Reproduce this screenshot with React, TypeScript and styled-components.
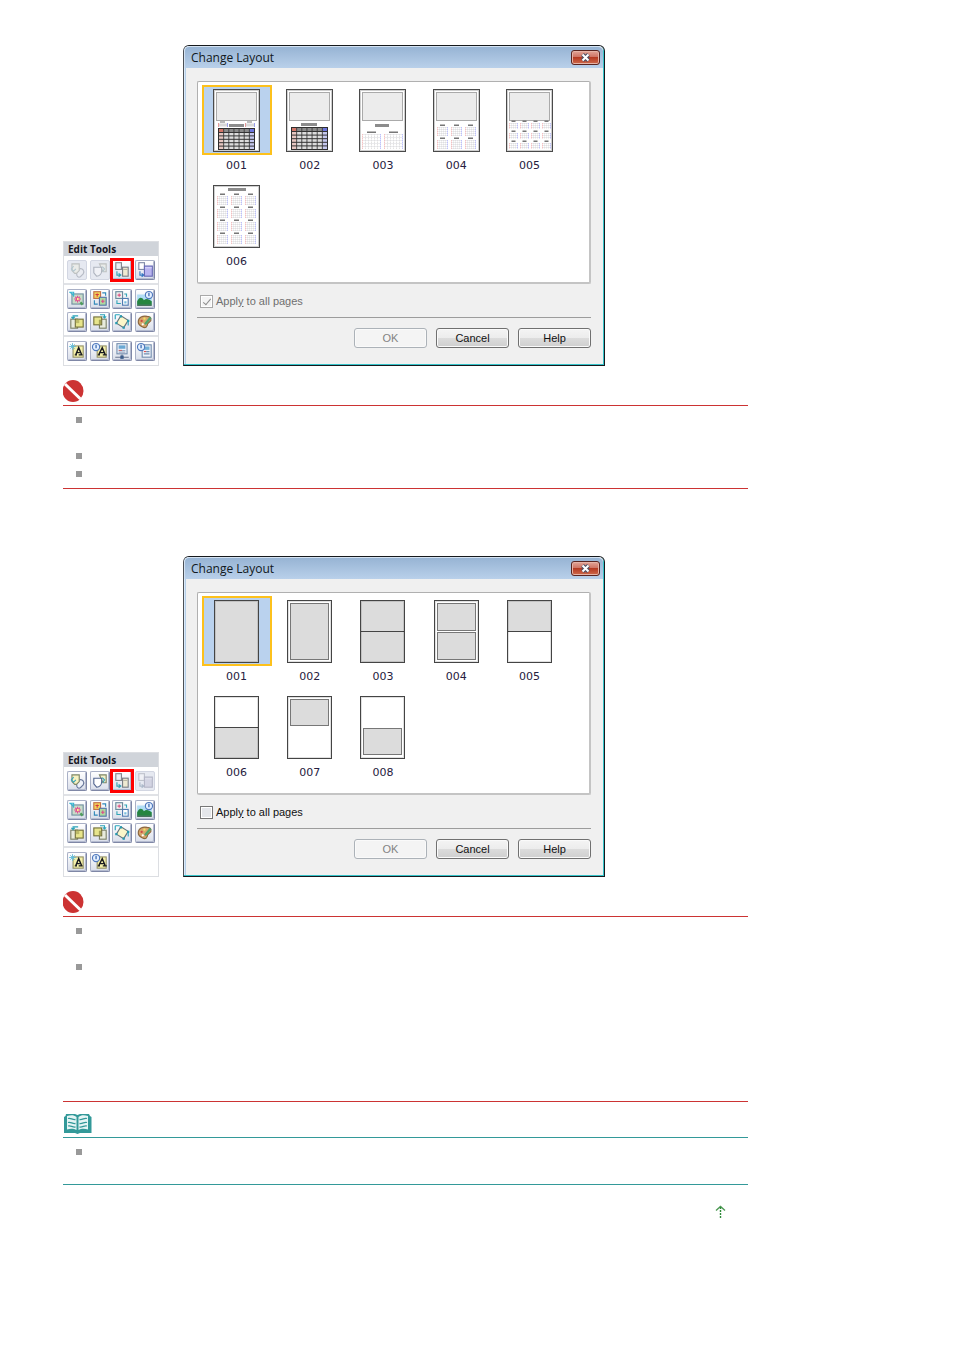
import React from "react";
import styled, { createGlobalStyle, css } from "styled-components";

const RED = "#cc3333";
const TEAL = "#339999";

const GlobalStyle = createGlobalStyle`
  *, *::before, *::after { box-sizing: border-box; }
  body {
    margin: 0;
    background: #fff;
    color: #111;
    font-family: "Liberation Sans", Arial, sans-serif;
    font-size: 12px;
  }
  button { font: inherit; color: inherit; margin: 0; padding: 0; }
`;

const Page = styled.main`
  max-width: 748px;
  padding: 45px 0 40px 63px;
`;

const Section = styled.section`
  margin-bottom: 67px;
`;

const Figure = styled.div`
  display: flex;
  align-items: flex-end;
  gap: 24px;
  margin-bottom: 14px;
`;

/* ---------- Edit Tools palette ---------- */

const Palette = styled.div`
  flex: none;
  width: 96px;
  border: 1px solid #dcdee2;
  background: #fff;
`;

const PaletteTitle = styled.h3`
  margin: 0;
  height: 14px;
  padding-left: 4px;
  background: #d0d4da;
  color: #15151f;
  font: bold 10px/14px "Open Sans", "Noto Sans", sans-serif;
`;

const ToolGroup = styled.div<{ $last?: boolean }>`
  display: grid;
  grid-template-columns: repeat(4, 20px);
  justify-content: space-between;
  row-gap: 3px;
  padding: ${(p) => (p.$last ? "4px 3px" : "4px 3px 3px")};
  border-bottom: ${(p) => (p.$last ? "0" : "2px solid #e0e2e6")};
`;

const ToolButton = styled.button<{ $marked?: boolean }>`
  width: 20px;
  height: 20px;
  display: grid;
  place-items: center;
  border: 1px solid #7f87a6;
  border-top-color: #a9b0c6;
  border-left-color: #a9b0c6;
  border-radius: 2px;
  background: linear-gradient(#ffffff, #d9deea);
  box-shadow: inset -1px -1px 0 #b4bbd0;
  &:disabled {
    border-color: #d2d6e2;
    background: #e6e9f1;
    box-shadow: none;
  }
  &:disabled svg { opacity: 0.4; filter: saturate(0.4); }
  ${(p) =>
    p.$marked &&
    css`
      border-radius: 0;
      outline: 3px solid #ff0000;
      outline-offset: -1px;
      z-index: 1;
    `}
`;

type ToolName =
  | "front" | "back" | "layout" | "background"
  | "insert" | "swap" | "replace" | "adjust"
  | "rotateLeft" | "rotateRight" | "crop" | "decorate"
  | "text" | "textInfo" | "calendar" | "holiday";

const Clock = ({ x, y }: { x: number; y: number }) => (
  <g>
    <circle cx={x} cy={y} r="3.2" fill="#e5f0ff" stroke="#4f78bd" />
    <path d={`M${x} ${y - 2}V${y + 1}`} stroke="#245aa8" />
  </g>
);

const toolArt: Record<ToolName, React.ReactNode> = {
  front: (
    <>
      <path d="M10 7c3-1 5 2 3.500 4.500L11 14c-2 1-4-1-3-3" fill="#eef2fa" stroke="#68779a" />
      <path d="M3.500 2.500h6.500v6L7.500 11H6L3.500 8.500z" fill="#f7f2c0" stroke="#7e8668" />
      <path d="M5 4.500 3 7l2 2 2-2" fill="none" stroke="#36a2b8" />
    </>
  ),
  back: (
    <>
      <path d="M7.500 2.500h6v7h-3z" fill="#f2f0c8" stroke="#7e8668" />
      <path d="M2.500 5.500h7v3c0 3-2 5-4.500 5l-2.500-3z" fill="#fff" stroke="#53658f" />
      <path d="m10 5 2 2-1.500 2.500" fill="none" stroke="#36a2b8" />
    </>
  ),
  layout: (
    <>
      <rect x="2.500" y="1.500" width="5" height="6" fill="#eceff4" stroke="#84888f" />
      <path d="M3.500 9v3.500H7M5 11l2 1.500L5 14" fill="none" stroke="#35a3b3" />
      <rect x="8.500" y="5.500" width="5" height="8" fill="#efead2" stroke="#7c7f86" />
      <path d="M9 7.500h4" stroke="#bbb8a6" />
    </>
  ),
  background: (
    <>
      <rect x="2.500" y="1.500" width="5" height="6" fill="#fff" stroke="#818ba8" />
      <path d="M3.500 9v3.500H7M5 11l2 1.500L5 14" fill="none" stroke="#3577c3" />
      <rect x="7.500" y="4.500" width="7" height="9" fill="#b9b4f0" stroke="#6769b5" />
      <path d="M8 6h6" stroke="#d8d6fa" />
    </>
  ),
  insert: (
    <>
      <rect x="3.500" y="3.500" width="10" height="9" fill="#c8dcc8" stroke="#7290a0" />
      <path d="M8.500 5v6M5.500 8h6M6.500 6l4 4M10.500 6l-4 4" stroke="#e24c91" />
      <rect x="8" y="7" width="1.500" height="2" fill="#fff28a" />
      <path d="M1 2h4v4M5 5 2 2" fill="none" stroke="#38b6d2" />
      <path d="m11 11 2 2" stroke="#4f9c5c" strokeWidth="2" />
    </>
  ),
  swap: (
    <>
      <rect x="2.500" y="1.500" width="6" height="6" fill="#f1d15b" stroke="#c1714b" />
      <path d="M4 4h3M5.500 3v3" stroke="#d7373e" />
      <rect x="7.500" y="6.500" width="6" height="7" fill="#aed9a0" stroke="#5575a9" />
      <path d="M9 10h3M10.500 8.500v3" stroke="#e04989" />
      <path d="M10 2.500h3V5M6 12.500H3V9" fill="none" stroke="#2f88b9" />
    </>
  ),
  replace: (
    <>
      <rect x="2.500" y="1.500" width="6" height="6" fill="#eef0ee" stroke="#698a9c" />
      <path d="M4 4.500h3M5.500 3v3" stroke="#dd5484" />
      <path d="M10 3.500h2V6M3.500 9v3H7" fill="none" stroke="#32a4b6" />
      <rect x="8.500" y="7.500" width="5" height="6" fill="#fff" stroke="#527bb1" />
      <path d="M10 10h2v2h-2z" fill="#79bdde" />
    </>
  ),
  adjust: (
    <>
      <rect x="1" y="4" width="13" height="9" fill="#b1ddf5" />
      <path d="M1 10c2-4 4-4 6-1 2-2 5-1 7 1v3H1z" fill="#268540" />
      <path d="M1 13.500h13" stroke="#174f2d" />
      <Clock x={11.5} y={4.5} />
    </>
  ),
  rotateLeft: (
    <>
      <rect x="2.500" y="5.500" width="6" height="8" fill="#e8ebdc" stroke="#7d8369" />
      <rect x="6.500" y="5.500" width="7" height="7" fill="#e7e58c" stroke="#73713c" />
      <path d="M7 6h3v3H7z" fill="#bdbb68" />
      <path d="M9 2.500H4.500V5M3 3.500 4.500 5 6 3.500" fill="none" stroke="#2da4b9" />
    </>
  ),
  rotateRight: (
    <>
      <rect x="7.500" y="5.500" width="6" height="8" fill="#e8ebdc" stroke="#7d8369" />
      <rect x="2.500" y="3.500" width="7" height="7" fill="#e7e58c" stroke="#73713c" />
      <path d="M7 6h2v4H7z" fill="#a6a456" />
      <path d="M8 1.500h4V4M10.500 3 12 4.500 13.500 3" fill="none" stroke="#2da4b9" />
    </>
  ),
  crop: (
    <>
      <path d="m7 2.500 6.500 4-4 6.500-6.500-4z" fill="#fbf7c9" stroke="#65757c" />
      <path d="M2 1.500h4M2 1.500v4M13.500 11v-3" stroke="#28a4bc" />
      <path d="M6 2h2v2H6zM12.500 6h2v2h-2zM8.500 12h2v2h-2zM2 8h2v2H2z" fill="#269ab0" />
    </>
  ),
  decorate: (
    <>
      <path d="M2 8c0-4 4-6 8-5 4 0 4 4 2 5-1 1-2 1-2 3-1 3-3 2-5 1C3 11 2 10 2 8z" fill="#d7a76c" stroke="#8c683f" />
      <circle cx="5" cy="7" r="1" fill="#cf4545" />
      <circle cx="7.500" cy="5" r="1" fill="#f1e560" />
      <circle cx="6" cy="10" r="1" fill="#fff" />
      <path d="m8 10 5-6" stroke="#4fa56d" strokeWidth="2" />
    </>
  ),
  text: (
    <>
      <rect x="4.500" y="3.500" width="9" height="10" fill="#f5f1a9" stroke="#969368" />
      <path d="M6 11.500h2M9.500 11.500H13M7 11l2.500-6 2.500 6M7.500 9.500h3" fill="none" stroke="#17181f" strokeWidth="1.200" />
      <path d="M4 1v6M1 4h6M2 2l4 4M6 2 2 6" stroke="#62bbd8" strokeWidth=".8" />
    </>
  ),
  textInfo: (
    <>
      <rect x="5.500" y="3.500" width="8" height="10" fill="#f5f1a9" stroke="#969368" />
      <path d="M6 11.500h2M10.500 11.500H14M7 11l3-6 2.500 6M7.500 9.500h4" fill="none" stroke="#17181f" strokeWidth="1.200" />
      <Clock x={4.5} y={4.5} />
    </>
  ),
  calendar: (
    <>
      <rect x="3.500" y="1.500" width="9" height="9" fill="#edf2fa" stroke="#758eae" />
      <rect x="5" y="3" width="6" height="3" fill="#6aa8d3" />
      <path d="M5 7.500h3" stroke="#c16a70" />
      <path d="M8 7.500h3M5 9h6" stroke="#9aa9c2" />
      <path d="M2 13.500h12M8 11v2" stroke="#68758e" />
      <path d="M6.500 12h3v3h-3z" fill="#3c5d8a" />
    </>
  ),
  holiday: (
    <>
      <rect x="5.500" y="2.500" width="8" height="11" fill="#edf2fa" stroke="#758eae" />
      <rect x="7" y="4" width="5" height="3" fill="#75b1d8" />
      <path d="M7 8.500h2" stroke="#df5454" />
      <path d="M9 8.500h3M7 10.500h5" stroke="#728eb1" />
      <Clock x={4.5} y={4.5} />
    </>
  ),
};

const ToolIcon = ({ name }: { name: ToolName }) => (
  <svg width="18" height="18" viewBox="0 0 16 16" aria-hidden="true">
    {toolArt[name]}
  </svg>
);

const toolGroups = (last: ToolName[]): ToolName[][] => [
  ["front", "back", "layout", "background"],
  ["insert", "swap", "replace", "adjust", "rotateLeft", "rotateRight", "crop", "decorate"],
  last,
];

const EditTools = ({ last, disabled }: { last: ToolName[]; disabled: ToolName[] }) => (
  <Palette>
    <PaletteTitle>Edit Tools</PaletteTitle>
    {toolGroups(last).map((group, i, all) => (
      <ToolGroup key={i} $last={i === all.length - 1}>
        {group.map((name) => (
          <ToolButton
            key={name}
            type="button"
            aria-label={name}
            disabled={disabled.includes(name)}
            $marked={name === "layout"}
          >
            <ToolIcon name={name} />
          </ToolButton>
        ))}
      </ToolGroup>
    ))}
  </Palette>
);

/* ---------- Change Layout dialog ---------- */

const Dialog = styled.div`
  flex: 0 1 422px;
  min-width: 0;
  border: 1px solid #16191d;
  border-left-color: #4b4f55;
  border-radius: 6px 6px 0 0;
  background: #f0f0f0;
  box-shadow: inset -1px -1px 0 #35c3c9, inset 1px 0 0 #dcebfa, inset 2px 0 0 #b5cfe9;
`;

const TitleBar = styled.div`
  display: flex;
  align-items: center;
  justify-content: space-between;
  height: 22px;
  margin-right: 1px;
  padding: 0 3px 0 6px;
  border-top: 1px solid #d5e3f2;
  border-left: 1px solid #d5e3f2;
  border-radius: 5px 5px 0 0;
  background: linear-gradient(#97b4d4, #b9d0ea);
`;

const Title = styled.h2`
  margin: 0;
  color: #101820;
  font: 12px/20px "Open Sans", "Noto Sans", sans-serif;
`;

const CloseButton = styled.button`
  width: 29px;
  height: 15px;
  display: grid;
  place-items: center;
  border: 1px solid #5a2420;
  border-radius: 3px;
  background: linear-gradient(#e2a598, #cf7464 45%, #b53a22 50%, #cf6a4c);
  box-shadow: inset 0 0 0 1px #e6b3a6;
`;

const DialogBody = styled.div`
  padding: 13px 13px 17px;
`;

const LayoutList = styled.div`
  display: grid;
  grid-template-columns: repeat(5, 1fr);
  grid-auto-rows: 92px;
  row-gap: 4px;
  justify-items: center;
  min-height: 203px;
  padding: 3px 23px 3px 2px;
  border: 1px solid #b0b0b0;
  border-right: 2px solid #c4c4c4;
  border-bottom: 2px solid #c4c4c4;
  border-radius: 2px;
  background: #fff;
`;

const LayoutItem = styled.button`
  display: flex;
  flex-direction: column;
  align-items: center;
  width: 70px;
  border: 0;
  background: none;
  color: #262040;
  font: 11px/22px "DejaVu Sans", Verdana, sans-serif;
`;

const Thumb = styled.span<{ $selected: boolean }>`
  flex: none;
  display: grid;
  place-items: center;
  width: 70px;
  height: 70px;
  border: 2px solid ${(p) => (p.$selected ? "#fdc11c" : "transparent")};
  background: ${(p) => (p.$selected ? "#bad2ee" : "none")};
`;

const ApplyLabel = styled.label<{ $disabled: boolean }>`
  display: flex;
  align-items: center;
  gap: 3px;
  height: 13px;
  margin: 11px 0 9px;
  padding-left: 3px;
  color: ${(p) => (p.$disabled ? "#6f6f6f" : "#111")};
  font-size: 11px;
  line-height: 13px;
`;

const CheckBox = styled.input`
  appearance: none;
  display: grid;
  place-items: center;
  width: 13px;
  height: 13px;
  margin: 0;
  border: 1px solid #777;
  background: #e4e6ea;
  box-shadow: inset 0 0 0 1px #fff;
  &:disabled { border-color: #a9a9a9; background: #f4f4f4; }
  &:checked::after {
    content: "";
    width: 4px;
    height: 8px;
    margin-bottom: 2px;
    border: solid #8c8c8c;
    border-width: 0 1px 1px 0;
    transform: rotate(40deg);
  }
`;

const Footer = styled.div`
  display: flex;
  justify-content: flex-end;
  gap: 9px;
  padding-top: 10px;
  border-top: 1px solid #9c9c9c;
`;

const PushButton = styled.button`
  width: 73px;
  height: 20px;
  border: 1px solid #707070;
  border-radius: 3px;
  background: linear-gradient(#f4f4f4, #ececec 50%, #dcdcdc 50%, #cfcfcf);
  box-shadow: inset 0 0 0 1px #fafafa;
  font-size: 11px;
  line-height: 18px;
  &:disabled {
    border-color: #acb2b8;
    background: #f4f4f4;
    color: #838383;
  }
`;

type Box = [x: number, y: number, w: number, h: number];
type Month = { x: number; y: number; w: number; h: number; cell: number };

interface LayoutArt {
  photo?: Box;
  heading?: Box;
  grid?: Box;
  minis?: boolean;
  months?: Month[];
}

const monthsAt = (centers: number[], tops: number[], w: number, h: number, cell = 2): Month[] =>
  tops.flatMap((y) => centers.map((c) => ({ x: c - w / 2, y, w, h, cell })));

const calendars: LayoutArt[] = [
  { photo: [3.5, 3.5, 40, 28], heading: [16, 35, 15, 3], grid: [5.5, 39.5, 36, 21], minis: true },
  { photo: [3.5, 3.5, 40, 28], heading: [15, 34, 16, 3], grid: [5.5, 38.5, 36, 22] },
  { photo: [3.5, 3.5, 40, 28], heading: [16, 35, 14, 3], months: monthsAt([12.5, 34.5], [43], 18, 15, 3) },
  { photo: [3.5, 3.5, 40, 28], months: monthsAt([9.5, 23.5, 37.5], [36, 49], 10, 9) },
  { photo: [3.5, 3.5, 40, 28], months: monthsAt([7.5, 18.5, 29.5, 40.5], [32, 42, 52], 8, 6) },
  { heading: [15, 3, 18, 3], months: monthsAt([9.5, 23.5, 37.5], [9, 22, 35, 48], 10, 9) },
];

const range = (from: number, to: number, step: number) => {
  const out: number[] = [];
  for (let v = from; v <= to; v += step) out.push(v);
  return out;
};

const MonthArt = ({ x, y, w, h, cell }: Month) => (
  <g>
    <rect x={x + w / 4} y={y - 0.5} width={w / 2} height="1.500" fill="#777" />
    {range(y + 2.5, y + 2 + h, cell).map((gy) => (
      <path key={`h${gy}`} d={`M${x} ${gy}h${w}`} stroke="#e2e2e6" strokeWidth="0.700" />
    ))}
    {range(x, x + w, cell).map((gx, i, all) => (
      <path
        key={`v${gx}`}
        d={`M${gx} ${y + 2}v${h}`}
        stroke={i === 0 ? "#f2b4b4" : i === all.length - 1 ? "#aeb4fa" : "#dcdcdc"}
        strokeWidth="0.800"
        strokeDasharray="1.500 0.500"
      />
    ))}
  </g>
);

const DayGrid = ({ box: [x, y, w, h] }: { box: Box }) => {
  const cw = w / 7;
  const body = y + 4;
  const rh = (h - 4) / 5;
  return (
    <g>
      <rect x={x} y={y} width={w} height={h} fill="#dcdcdc" />
      <rect x={x} y={y} width={w} height="4" fill="#8a8a8a" />
      <rect x={x} y={y} width={cw} height="4" fill="#d27668" />
      <rect x={x + w - cw} y={y} width={cw} height="4" fill="#6c75dc" />
      <rect x={x} y={body} width={cw} height={h - 4} fill="#e6c6c0" />
      <rect x={x + w - cw} y={body} width={cw} height={h - 4} fill="#c5c8ee" />
      <rect x={x} y={y} width={w} height={h} fill="none" stroke="#2e2e2e" />
      {[1, 2, 3, 4, 5, 6].map((i) => (
        <path key={i} d={`M${x + cw * i} ${y}v${h}`} stroke="#3c3c3c" strokeWidth="0.900" />
      ))}
      {[0, 1, 2, 3, 4].map((i) => (
        <path key={i} d={`M${x} ${body + rh * i}h${w}`} stroke="#333" strokeWidth="1" />
      ))}
    </g>
  );
};

const CalendarThumb = ({ art }: { art: LayoutArt }) => (
  <svg width="47" height="63" viewBox="0 0 47 63" aria-hidden="true">
    <rect x=".5" y=".5" width="46" height="62" fill="#fff" stroke="#4a4a4a" />
    <rect x="1.500" y="1.500" width="44" height="60" fill="none" stroke="#cfcfcf" />
    {art.photo && (
      <rect x={art.photo[0]} y={art.photo[1]} width={art.photo[2]} height={art.photo[3]} fill="#ececec" stroke="#aaa" />
    )}
    {art.heading && (
      <rect x={art.heading[0]} y={art.heading[1]} width={art.heading[2]} height={art.heading[3]} fill="#8c8c8c" />
    )}
    {art.minis &&
      [5, 32].map((x) => (
        <g key={x}>
          <path d={`M${x + 2} 33h5`} stroke="#777" />
          <rect x={x} y="34.500" width="10" height="3" fill="#d8d8d8" />
          <path d={`M${x + 0.5} 34v4`} stroke="#e59a9a" />
          <path d={`M${x + 9.5} 34v4`} stroke="#9aa0ec" />
        </g>
      ))}
    {art.grid && <DayGrid box={art.grid} />}
    {art.months?.map((m) => <MonthArt key={`${m.x}-${m.y}`} {...m} />)}
  </svg>
);

interface FrameArt {
  fills: Box[];
  framed?: boolean;
  split?: boolean;
}

const photoFrames: FrameArt[] = [
  { fills: [[1, 1, 43, 61]] },
  { fills: [[3.5, 3.5, 38, 56]], framed: true },
  { fills: [[1, 1, 43, 61]], split: true },
  { fills: [[3.5, 3.5, 38, 27], [3.5, 32.5, 38, 27]], framed: true },
  { fills: [[1, 1, 43, 31]], split: true },
  { fills: [[1, 31, 43, 31]], split: true },
  { fills: [[3.5, 3.5, 38, 26]], framed: true },
  { fills: [[3.5, 32.5, 38, 26]], framed: true },
];

const PhotoThumb = ({ art }: { art: FrameArt }) => (
  <svg width="45" height="63" viewBox="0 0 45 63" aria-hidden="true">
    <rect width="45" height="63" fill="#fff" />
    {art.fills.map(([x, y, w, h]) => (
      <rect key={y} x={x} y={y} width={w} height={h} fill="#dcdcdc" stroke={art.framed ? "#777" : "none"} />
    ))}
    {art.split && <path d="M0 31.500h45" stroke="#444" />}
    <rect x="1.500" y="1.500" width="42" height="60" fill="none" stroke="#000" strokeOpacity=".12" />
    <rect x=".5" y=".5" width="44" height="62" fill="none" stroke="#444" />
  </svg>
);

interface DialogProps {
  id: string;
  thumbs: React.ReactNode[];
  locked?: boolean;
}

const ChangeLayoutDialog = ({ id, thumbs, locked = false }: DialogProps) => (
  <Dialog role="dialog" aria-labelledby={`${id}-title`}>
    <TitleBar>
      <Title id={`${id}-title`}>Change Layout</Title>
      <CloseButton type="button" aria-label="Close">
        <svg width="11" height="9" viewBox="0 0 11 9" aria-hidden="true">
          <path d="m2.500 1.500 6 6m0-6-6 6" stroke="#4a4f66" strokeWidth="4" />
          <path d="m2.500 1.500 6 6m0-6-6 6" stroke="#fff" strokeWidth="2" />
        </svg>
      </CloseButton>
    </TitleBar>
    <DialogBody>
      <LayoutList>
        {thumbs.map((thumb, i) => (
          <LayoutItem key={i} type="button" aria-pressed={i === 0}>
            <Thumb $selected={i === 0}>{thumb}</Thumb>
            {`00${i + 1}`}
          </LayoutItem>
        ))}
      </LayoutList>
      <ApplyLabel htmlFor={`${id}-all`} $disabled={locked}>
        <CheckBox id={`${id}-all`} type="checkbox" defaultChecked={locked} disabled={locked} />
        <span>
          Appl<u>y</u> to all pages
        </span>
      </ApplyLabel>
      <Footer>
        <PushButton type="button" disabled>OK</PushButton>
        <PushButton type="button">Cancel</PushButton>
        <PushButton type="button">Help</PushButton>
      </Footer>
    </DialogBody>
  </Dialog>
);

/* ---------- Notes ---------- */

const NoteBox = styled.aside<{ $color: string }>`
  border-bottom: 1px solid ${(p) => p.$color};
`;

const NoteHead = styled.div<{ $color: string }>`
  padding-bottom: 3px;
  border-bottom: 1px solid ${(p) => p.$color};
  svg { display: block; }
`;

const NoteList = styled.ul`
  margin: 0;
  padding: 5px 0 5px 13px;
  list-style: none;
`;

const NoteItem = styled.li<{ $height: number }>`
  min-height: ${(p) => p.$height}px;
  padding-top: 6px;
  &::before {
    content: "";
    display: block;
    width: 6px;
    height: 6px;
    background: #999;
  }
`;

const ProhibitedIcon = () => (
  <svg width="21" height="22" viewBox="0 0 21 22" role="img" aria-label="Important">
    <ellipse cx="10" cy="11" rx="10.500" ry="11" fill={RED} />
    <path d="m2 4 15.500 15" stroke="#fff" strokeWidth="3" />
  </svg>
);

const BookIcon = () => (
  <svg width="30" height="20" viewBox="0 0 30 20" role="img" aria-label="Note">
    <path d="M3 0h9l2.500 1L17 0h9l1 2 1.500 1v16H17l-2.500 1-2.500-1H1V3l1.500-1z" fill={TEAL} />
    <path d="M4 2c4-1 7-1 9.500 1v13C11 14.500 7 14.500 4 15.500zM25 2c-4-1-7-1-9.500 1v13c2.500-1.500 6.500-1.500 9.500-.5z" fill="#e6f5f5" />
    <path
      d="M5 4.500c3-1 4 1.500 7.500 1M5 8.500c3-1 4 1.500 7.500 1M5 12c3-1 4 1.500 7.500 1M24 4.500c-3-1-4 1.500-7.500 1M24 8.500c-3-1-4 1.500-7.500 1M24 12c-3-1-4 1.500-7.500 1"
      fill="none"
      stroke={TEAL}
      strokeWidth="1.300"
    />
  </svg>
);

interface NoteProps {
  color: string;
  icon: React.ReactNode;
  items: number[];
}

const Note = ({ color, icon, items }: NoteProps) => (
  <NoteBox $color={color}>
    <NoteHead $color={color}>{icon}</NoteHead>
    <NoteList>
      {items.map((height, i) => (
        <NoteItem key={i} $height={height} />
      ))}
    </NoteList>
  </NoteBox>
);

const Notes = styled.div`
  display: grid;
  gap: 12px;
`;

const PageFooter = styled.footer`
  display: flex;
  justify-content: flex-end;
  margin-top: 20px;
  padding-right: 22px;
`;

const TopLink = styled.a`
  display: block;
  height: 13px;
`;

export default function App() {
  return (
    <>
      <GlobalStyle />
      <Page id="top">
        <Section>
          <Figure>
            <EditTools
              last={["text", "textInfo", "calendar", "holiday"]}
              disabled={["front", "back"]}
            />
            <ChangeLayoutDialog
              id="calendar"
              locked
              thumbs={calendars.map((art, i) => <CalendarThumb key={i} art={art} />)}
            />
          </Figure>
          <Note color={RED} icon={<ProhibitedIcon />} items={[36, 18, 18]} />
        </Section>
        <Figure>
          <EditTools last={["text", "textInfo"]} disabled={["background"]} />
          <ChangeLayoutDialog
            id="photo"
            thumbs={photoFrames.map((art, i) => <PhotoThumb key={i} art={art} />)}
          />
        </Figure>
        <Notes>
          <Note color={RED} icon={<ProhibitedIcon />} items={[36, 138]} />
          <Note color={TEAL} icon={<BookIcon />} items={[36]} />
        </Notes>
        <PageFooter>
          <TopLink href="#top" aria-label="Page top">
            <svg width="11" height="13" viewBox="0 0 11 13" aria-hidden="true">
              <path d="m1 5.500 4.500-4 4.500 4" fill="none" stroke="#4f9a55" strokeWidth="1.400" />
              <path d="M5.500 2v11" stroke="#2f8a3a" strokeWidth="1.400" strokeDasharray="2 1" />
            </svg>
          </TopLink>
        </PageFooter>
      </Page>
    </>
  );
}
